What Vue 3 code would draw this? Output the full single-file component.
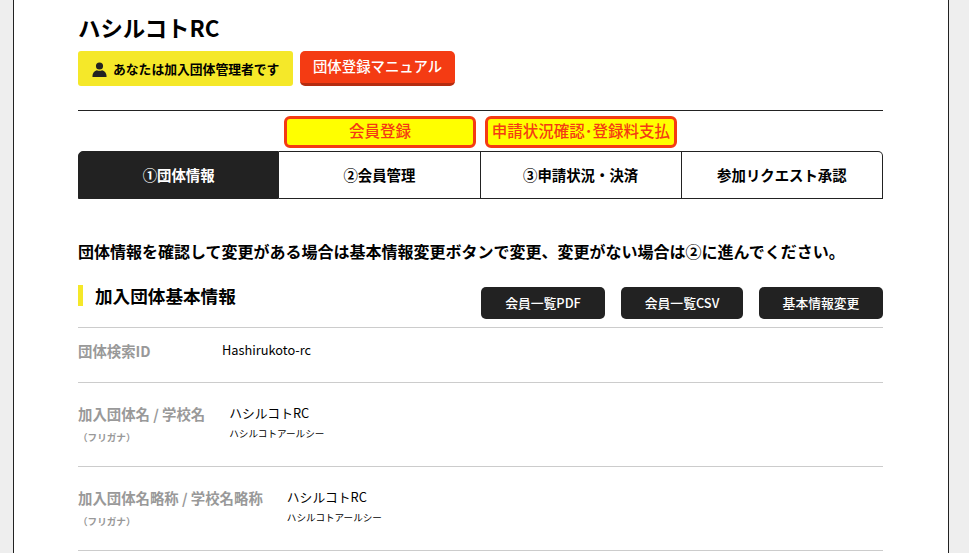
<script setup>
const tabs = [
  { label: '①団体情報', active: true },
  { label: '②会員管理' },
  { label: '③申請状況・決済' },
  { label: '参加リクエスト承認' },
]
const actions = ['会員一覧PDF', '会員一覧CSV', '基本情報変更']
const rows = [
  { label: '団体検索ID', value: 'Hashirukoto-rc' },
  { label: '加入団体名 / 学校名', kana: '（フリガナ）', value: 'ハシルコトRC', sub: 'ハシルコトアールシー' },
  { label: '加入団体名略称 / 学校名略称', kana: '（フリガナ）', value: 'ハシルコトRC', sub: 'ハシルコトアールシー' },
]
</script>

<template>
  <div class="page">
    <main class="sheet">
      <h1 class="title">ハシルコトRC</h1>
      <div class="badges">
        <div class="role">
          <svg class="person" viewBox="0 0 16 16" width="15" height="15" aria-hidden="true">
            <circle cx="8" cy="4.2" r="3.8" fill="#222" />
            <path d="M.4 15.5c0-3.900 2.200-6.200 4.800-6.800 1.700 1 3.900 1 5.600 0 2.600.6 4.800 2.900 4.800 6.800 0 .3-.2.5-.5.5H.9c-.3 0-.5-.2-.5-.5z" fill="#222" />
          </svg>
          <span>あなたは加入団体管理者です</span>
        </div>
        <a class="manual">団体登録マニュアル</a>
      </div>
      <hr class="rule" />
      <div class="cta-row">
        <a class="cta">会員登録</a>
        <a class="cta">申請状況確認･登録料支払</a>
      </div>
      <nav class="tabs">
        <a v-for="t in tabs" :key="t.label" class="tab" :class="{ active: t.active }">{{ t.label }}</a>
      </nav>
      <p class="lead">団体情報を確認して変更がある場合は基本情報変更ボタンで変更、変更がない場合は②に進んでください。</p>
      <div class="section-head">
        <h2 class="section-title">加入団体基本情報</h2>
        <div class="actions">
          <a v-for="a in actions" :key="a" class="action">{{ a }}</a>
        </div>
      </div>
      <dl class="rows">
        <div v-for="r in rows" :key="r.label" class="row" :class="{ tall: r.sub }">
          <dt class="label">
            <span class="label-main">{{ r.label }}</span>
            <span v-if="r.kana" class="kana">{{ r.kana }}</span>
          </dt>
          <dd class="value">
            <span class="value-main">{{ r.value }}</span>
            <span v-if="r.sub" class="sub">{{ r.sub }}</span>
          </dd>
        </div>
      </dl>
    </main>
  </div>
</template>

<style scoped>
.page {
  height: 553px;
  overflow: hidden;
  background: #eee;
  font-family: "Noto Sans CJK JP", "Noto Sans", sans-serif;
  color: #000;
}
.sheet {
  box-sizing: border-box;
  width: 936px;
  min-height: 553px;
  margin-left: 13px;
  padding: 0 65px 0 64px;
  background: #fff;
  border: solid #222;
  border-width: 0 1px;
}
.title {
  margin: 0;
  padding-top: 9px;
  font-size: 22.4px;
  line-height: 36px;
  font-weight: 700;
}
.badges {
  display: flex;
  gap: 7px;
  margin-top: 6px;
}
.role {
  display: flex;
  align-items: center;
  gap: 6px;
  box-sizing: border-box;
  width: 215px;
  height: 35px;
  padding-left: 14px;
  background: #f5e829;
  border-radius: 3px;
  font-size: 12.8px;
  font-weight: 700;
}
.person { flex: none; margin-top: 2px; }
.manual {
  box-sizing: border-box;
  width: 155px;
  height: 35px;
  background: #f43b13;
  border-bottom: 3px solid #b52c10;
  border-radius: 5px;
  color: #fff;
  font-size: 14.4px;
  font-weight: 500;
  line-height: 30px;
  text-align: center;
}
.rule {
  height: 1px;
  margin: 24px 0 0;
  border: 0;
  background: #222;
}
.cta-row {
  display: flex;
  justify-content: center;
  gap: 9px;
  margin-top: 5px;
}
.cta {
  box-sizing: border-box;
  width: 192px;
  height: 32px;
  background: #ff0;
  border: 3px solid #f43b13;
  border-radius: 6px;
  color: #f43b13;
  font-size: 15.5px;
  font-weight: 500;
  line-height: 22px;
  text-align: center;
  white-space: nowrap;
}
.tabs {
  display: grid;
  grid-template-columns: repeat(4, 1fr);
  height: 48px;
  margin-top: 3px;
}
.tab {
  display: flex;
  align-items: center;
  justify-content: center;
  box-sizing: border-box;
  padding-bottom: 2px;
  font-size: 14.4px;
  font-weight: 700;
  border: solid #222;
  border-width: 1px 1px 1px 0;
}
.tab:first-child {
  border-left-width: 1px;
  border-top-left-radius: 5px;
}
.tab:last-child { border-top-right-radius: 5px; }
.tab.active {
  background: #222;
  color: #fff;
}
.lead {
  margin: 40px 0 0;
  font-size: 16px;
  line-height: 24px;
  font-weight: 700;
}
.section-head {
  display: flex;
  justify-content: space-between;
  align-items: flex-start;
  margin-top: 22px;
  padding-bottom: 8px;
  border-bottom: 1px solid #ccc;
}
.section-title {
  margin: 0;
  padding-left: 12px;
  border-left: 5px solid #f5e829;
  font-size: 17.6px;
  line-height: 21px;
  font-weight: 700;
}
.actions {
  display: flex;
  gap: 16px;
  margin-top: 2px;
}
.action {
  box-sizing: border-box;
  width: 124px;
  height: 32px;
  background: #222;
  border-radius: 5px;
  color: #fff;
  font-size: 12.8px;
  font-weight: 500;
  line-height: 32px;
  text-align: center;
}
.action:nth-child(2) { width: 122px; }
.rows { margin: 0; }
.row {
  display: flex;
  box-sizing: border-box;
  height: 55px;
  padding-top: 12px;
  border-bottom: 1px solid #ccc;
}
.row.tall {
  height: 84px;
  padding-top: 20px;
}
.label {
  box-sizing: border-box;
  min-width: 144px;
  padding-right: 24px;
  color: #999;
  font-weight: 700;
}
.label-main {
  display: block;
  font-size: 14.4px;
  line-height: 21px;
}
.kana {
  display: block;
  margin-top: 6px;
  font-size: 9.6px;
  line-height: 14px;
}
.value { margin: 0; }
.value-main {
  display: block;
  font-size: 12.8px;
  line-height: 20px;
}
.sub {
  display: block;
  margin-top: 3px;
  font-size: 9.6px;
  line-height: 14px;
}
</style>
